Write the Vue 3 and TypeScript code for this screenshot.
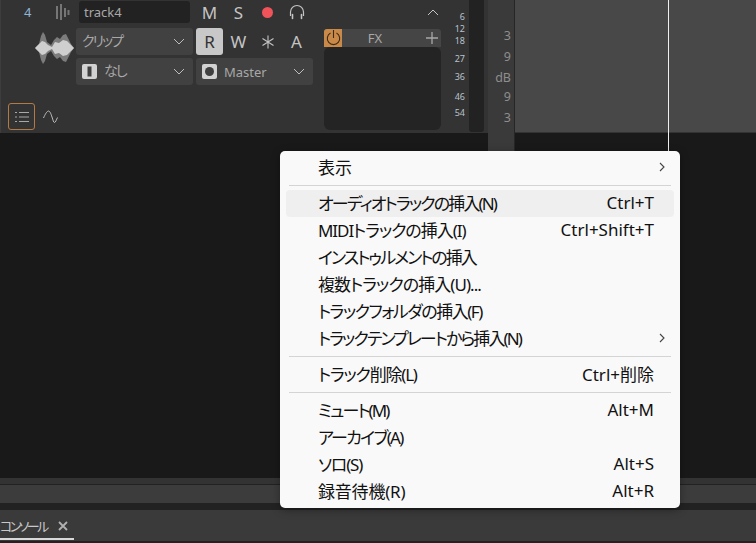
<script setup lang="ts">
const meterTicks = [
  { label: '6', top: 11 },
  { label: '12', top: 23 },
  { label: '18', top: 35 },
  { label: '27', top: 53 },
  { label: '36', top: 71 },
  { label: '46', top: 91 },
  { label: '54', top: 107 },
]
const rulerTicks = [
  { label: '3', top: 27 },
  { label: '9', top: 48 },
  { label: 'dB', top: 69 },
  { label: '9', top: 88 },
  { label: '3', top: 109 },
]
type Row = { sep?: boolean; label?: string; key?: string; sub?: boolean; hover?: boolean; ls?: number }
const rows: Row[] = [
  { label: '表示', sub: true },
  { sep: true },
  { label: 'オーディオトラックの挿入(N)', key: 'Ctrl+T', hover: true, ls: -1.85 },
  { label: 'MIDIトラックの挿入(I)', key: 'Ctrl+Shift+T', ls: -1.05 },
  { label: 'インストゥルメントの挿入', ls: -1.95 },
  { label: '複数トラックの挿入(U)...', ls: -0.95 },
  { label: 'トラックフォルダの挿入(F)', ls: -1.5 },
  { label: 'トラックテンプレートから挿入(N)', sub: true, ls: -1.9 },
  { sep: true },
  { label: 'トラック削除(L)', key: 'Ctrl+削除', ls: -1.2 },
  { sep: true },
  { label: 'ミュート(M)', key: 'Alt+M', ls: -1.9 },
  { label: 'アーカイブ(A)', ls: -1.7 },
  { label: 'ソロ(S)', key: 'Alt+S', ls: -1.2 },
  { label: '録音待機(R)', key: 'Alt+R', ls: -0.2 },
]
</script>

<template>
  <div class="app">
    <div class="top">
      <section class="track">
        <div class="head">
          <div class="row-one">
            <span class="index">4</span>
            <svg class="bars" width="16" height="18" viewBox="0 0 16 18">
              <path d="M2 3v13M6 1v16M10 5v9M13.500 7v5" stroke="#767676" stroke-width="2" fill="none" />
            </svg>
            <div class="name">track4</div>
            <div class="icon-btns">
              <span class="tb">M</span>
              <span class="tb">S</span>
              <span class="tb"><i class="rec"></i></span>
              <span class="tb">
                <svg width="16" height="16" viewBox="0 0 16 16" fill="none">
                  <path d="M1.500 12V8a6.500 6.500 0 0 1 13 0v4" stroke="#c4c4c4" stroke-width="1.200" />
                  <path d="M3.500 10.500v4M12.500 10.500v4" stroke="#c4c4c4" stroke-width="1.600" stroke-linecap="round" />
                </svg>
              </span>
            </div>
          </div>
          <div class="row-two">
            <div class="wave-col">
              <svg width="40" height="32" viewBox="0 0 40 32">
                <path d="M0 16 4 12 6 4 8 0 10 3 12 10 16 13 19 8 22 5 25 7 28 3 31 2 33 6 36 12 39 16 36 20 33 26 31 30 28 29 25 25 22 27 19 24 16 19 12 22 10 29 8 32 6 28 4 20Z" fill="#7c7c7c" />
                <path d="M0 16 7 9 10 10 13 13 17 15 20 10 24 11 28 8 32 9 36 13 39 16 36 19 32 23 28 24 24 21 20 22 17 17 13 19 10 22 7 23Z" fill="#cfcfcf" />
              </svg>
            </div>
            <div class="ctrl-grid">
              <div class="select">
                <span class="sel-text jp">クリップ</span>
                <svg class="chev" width="12" height="7" viewBox="0 0 12 7"><path d="M1 1l5 5 5-5" stroke="#bdbdbd" fill="none" /></svg>
              </div>
              <div class="btn-row">
                <span class="tb r-on">R</span>
                <span class="tb">W</span>
                <span class="tb star">
                  <svg width="14" height="14" viewBox="0 0 14 14"><path d="M7 .5v13M1.500 3.500l11 7M12.500 3.500l-11 7" stroke="#c4c4c4" stroke-width="1.100" /></svg>
                </span>
                <span class="tb">A</span>
              </div>
              <div class="select">
                <svg class="badge" width="15" height="15" viewBox="0 0 15 15"><rect width="15" height="15" rx="2" fill="#d2d2d2" /><rect x="5.500" y="2.500" width="4" height="10" fill="#3f3f3f" /></svg>
                <span class="sel-text jp">なし</span>
                <svg class="chev" width="12" height="7" viewBox="0 0 12 7"><path d="M1 1l5 5 5-5" stroke="#bdbdbd" fill="none" /></svg>
              </div>
              <div class="select">
                <svg class="badge" width="15" height="15" viewBox="0 0 15 15"><rect width="15" height="15" rx="2" fill="#d2d2d2" /><circle cx="7.500" cy="7.500" r="4.500" fill="#3f3f3f" /></svg>
                <span class="sel-text">Master</span>
                <svg class="chev" width="12" height="7" viewBox="0 0 12 7"><path d="M1 1l5 5 5-5" stroke="#bdbdbd" fill="none" /></svg>
              </div>
            </div>
          </div>
          <div class="foot">
            <span class="list-btn">
              <svg width="14" height="12" viewBox="0 0 14 12"><path d="M0 1.500h2M4 1.500h10M0 6h2M4 6h10M0 10.500h2M4 10.500h10" stroke="#a8a8a8" stroke-width="1.200" fill="none" /></svg>
            </span>
            <svg class="curve" width="15" height="14" viewBox="0 0 15 14"><path d="M.5 8C2 4.500 4 1 5.500 1S8 4 9 7s1.500 5.500 2.500 5.500 2-3 3-5" stroke="#bdbdbd" stroke-width="1" fill="none" /></svg>
          </div>
        </div>
        <div class="fx-col">
          <div class="fx-top">
            <svg width="12" height="7" viewBox="0 0 12 7"><path d="M1 6l5-5 5 5" stroke="#c4c4c4" fill="none" /></svg>
          </div>
          <div class="fx">
            <div class="fx-head">
              <span class="power">
                <svg width="15" height="16" viewBox="0 0 15 16" fill="none"><path d="M4.500 3a6.200 6.200 0 1 0 6 0M7.500 0v8" stroke="#3d2a14" stroke-width="1.100" /></svg>
              </span>
              <span class="fx-label">FX</span>
              <svg class="plus" width="12" height="12" viewBox="0 0 12 12"><path d="M6 0v12M0 6h12" stroke="#a8a8a8" stroke-width="1.300" /></svg>
            </div>
            <div class="fx-body"></div>
          </div>
        </div>
        <div class="meter-scale">
          <span v-for="t in meterTicks" :key="t.label" class="m-tick" :style="{ top: t.top + 'px' }">{{ t.label }}</span>
        </div>
        <div class="meter"></div>
      </section>
      <section class="ruler">
        <span v-for="(t, i) in rulerTicks" :key="i" class="r-tick" :style="{ top: t.top + 'px' }">{{ t.label }}</span>
      </section>
      <section class="lane">
        <div class="playhead"></div>
      </section>
    </div>

    <div class="canvas">
      <div class="ruler-rest"></div>
    </div>

    <div class="scroll-band">
      <div class="scroll-inner"></div>
    </div>
    <div class="tabs">
      <div class="tab">
        <span class="tab-label">コンソール</span>
        <svg width="10" height="10" viewBox="0 0 10 10"><path d="M1 1l8 8M9 1L1 9" stroke="#b0b0b0" stroke-width="1.800" /></svg>
      </div>
    </div>

    <div class="menu">
      <template v-for="(r, i) in rows" :key="i">
        <div v-if="r.sep" class="sep"></div>
        <div v-else class="item" :class="{ hover: r.hover }">
          <span class="lbl" :style="{ letterSpacing: (r.ls ?? 0) + 'px' }">{{ r.label }}</span>
          <span v-if="r.key" class="key">{{ r.key }}</span>
          <svg v-if="r.sub" class="arrow" width="6" height="10" viewBox="0 0 6 10"><path d="M1 1l4 4-4 4" stroke="#444" stroke-width="1.100" fill="none" /></svg>
        </div>
      </template>
    </div>
  </div>
</template>

<style scoped>
.app {
  position: relative;
  width: 756px;
  height: 543px;
  overflow: hidden;
  display: flex;
  flex-direction: column;
  background: #191919;
  font-family: "Noto Sans", "Noto Sans CJK JP", sans-serif;
  font-feature-settings: "palt";
  color: #c4c4c4;
}
.top { display: flex; height: 133px; flex: none; }
.track {
  position: relative;
  width: 488px;
  flex: none;
  display: flex;
  background: #333;
  box-sizing: border-box;
  border-left: 1px solid #3d3d3d;
  padding-left: 4px;
}
.head { width: 308px; flex: none; display: flex; flex-direction: column; padding-top: 1px; box-sizing: border-box; }
.row-one { display: flex; align-items: center; height: 22px; }
.index { width: 26px; margin-left: 19px; font-size: 13px; color: #8fb6d6; box-sizing: border-box; }
.bars { margin-left: 5px; }
.name {
  margin-left: 8px;
  width: 111px;
  height: 22px;
  line-height: 22px;
  background: #222;
  border-radius: 3px;
  font-size: 13px;
  color: #a8a8a8;
  padding-left: 5px;
  box-sizing: border-box;
}
.icon-btns { display: flex; margin-left: 5px; }
.tb {
  width: 29px;
  height: 22px;
  display: flex;
  align-items: center;
  justify-content: center;
  font-size: 17px;
  color: #c4c4c4;
}
.rec { width: 11px; height: 11px; border-radius: 50%; background: #f0535a; }
.row-two { display: flex; margin-top: 5px; }
.wave-col { width: 71px; flex: none; padding: 4px 0 0 30px; box-sizing: border-box; }
.ctrl-grid { display: grid; grid-template-columns: 117px 117px; grid-auto-rows: 27px; gap: 3px; }
.select {
  height: 27px;
  background: #414141;
  border-radius: 3px;
  display: flex;
  align-items: center;
  padding: 0 7px 0 6px;
  box-sizing: border-box;
  font-size: 13px;
  color: #a8a8a8;
}
.sel-text { flex: 1; }
.sel-text.jp { font-size: 14px; letter-spacing: -2px; margin-top: -3px; }
.badge { margin-right: 7px; }
.chev { flex: none; margin-right: 1px; }
.btn-row { display: flex; }
.btn-row .tb { height: 27px; width: 29px; }
.btn-row .tb.r-on { width: 27px; background: #c8c8c8; color: #333; border-radius: 3px; margin-right: 1px; }
.foot { margin-top: auto; padding: 0 0 3px 3px; display: flex; align-items: center; }
.list-btn {
  width: 27px;
  height: 27px;
  box-sizing: border-box;
  border: 1.500px solid #b47a45;
  border-radius: 3px;
  display: flex;
  align-items: center;
  justify-content: center;
}
.curve { margin-left: 8px; }
.fx-col { width: 117px; margin-left: 11px; flex: none; display: flex; flex-direction: column; padding-bottom: 3px; box-sizing: border-box; }
.fx-top { height: 29px; display: flex; justify-content: flex-end; padding: 9px 2px 0 0; box-sizing: border-box; }
.fx { flex: 1; display: flex; flex-direction: column; }
.fx-head { height: 18px; background: #454545; border-radius: 3px 3px 0 0; display: flex; align-items: center; }
.power { width: 18px; height: 18px; background: #c98a49; border-radius: 3px 0 0 0; display: flex; align-items: center; justify-content: center; }
.fx-label { flex: 1; text-align: center; font-size: 13px; color: #a8a8a8; padding-right: 18px; }
.plus { margin-right: 3px; }
.fx-body { flex: 1; background: #242424; border-radius: 6px; }
.meter-scale { position: relative; width: 24px; flex: none; }
.m-tick { position: absolute; right: 0; font-size: 9px; line-height: 12px; color: #b8c2cc; }
.meter { width: 15px; margin-left: 4px; height: 132px; background: #222; border-radius: 0 0 3px 3px; flex: none; }
.ruler { position: relative; width: 27px; flex: none; background: #3a3a3a; border-right: 1px solid #262626; box-sizing: border-box; }
.r-tick { position: absolute; right: 3px; margin-top: 1px; font-size: 12.500px; line-height: 16px; color: #8e8e8e; }
.lane { position: relative; flex: 1; background: #484848; border-bottom: 1px solid #333; box-sizing: border-box; display: flex; padding-left: 153px; }
.playhead { width: 1px; height: 151px; background: #eee; flex: none; position: relative; z-index: 1; }
.canvas { flex: 1; display: flex; padding-left: 488px; }
.ruler-rest { width: 27px; background: #3a3a3a; border-right: 1px solid #262626; box-sizing: border-box; }
.scroll-band { height: 25px; flex: none; background: #333; padding-top: 6px; box-sizing: border-box; display: flex; flex-direction: column; }
.scroll-inner { flex: none; height: 19px; background: #3c3c3c; border-top: 1px solid #222; box-sizing: border-box; }
.tabs { height: 40px; flex: none; background: #222; padding-top: 7px; box-sizing: border-box; display: flex; flex-direction: column; }
.tab {
  height: 31px;
  background: #3a3a3a;
  display: flex;
  align-items: center;
  gap: 11px;
  font-size: 13px;
  color: #c8c8c8;
  position: relative;
}
.tab-label { letter-spacing: -2.600px; margin-left: 0; }
.tab::after { content: ""; position: absolute; left: 0; bottom: 1px; width: 74px; height: 2px; background: #d8d8d8; }
.menu {
  position: absolute;
  left: 280px;
  top: 151px;
  width: 400px;
  height: 357px;
  box-sizing: border-box;
  padding: 3px 6px;
  background: #f9f9f9;
  border-radius: 5px;
  box-shadow: 0 2px 8px rgba(0, 0, 0, .35);
  z-index: 2;
  color: #111;
  font-size: 17px;
}
.item {
  position: relative;
  height: 27px;
  display: flex;
  align-items: center;
  justify-content: space-between;
  padding: 0 20px 0 32px;
  border-radius: 4px;
}
.lbl, .key { margin-top: -2px; white-space: nowrap; }
.item.hover { background: #efefef; }
.arrow { position: absolute; right: 9px; top: 8px; }
.sep { height: 1px; background: #d4d4d4; margin: 4px 3px; }
</style>
